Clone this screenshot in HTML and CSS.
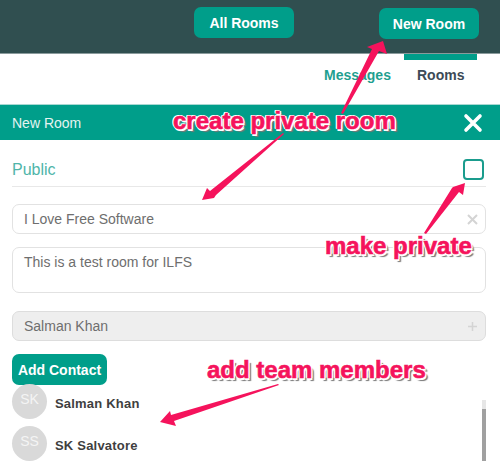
FILE: index.html
```html
<!DOCTYPE html>
<html lang="en">

<head>
    <meta charset="UTF-8">
    <meta name="viewport" content="width=device-width, initial-scale=1.0">
    <title>New Room</title>
    <link rel="stylesheet" href="styles.css">
</head>

<body>
    <div class="page">
        <header class="topbar">
            <button class="btn btn-all">All Rooms</button>
            <button class="btn btn-new">New Room</button>
        </header>

        <nav class="tabs">
            <a class="tab tab-messages">Messages</a>
            <a class="tab tab-rooms">Rooms</a>
        </nav>

        <div class="panel-head">
            <span>New Room</span>
            <svg class="close" width="20" height="20" viewBox="0 0 20 20">
                <path d="M3 3 L17 17 M17 3 L3 17" stroke="#fff" stroke-width="3.6" stroke-linecap="round" />
            </svg>
        </div>

        <div class="form">
            <div class="public-row">
                <span>Public</span>
                <span class="checkbox"></span>
            </div>

            <div class="field field-name">
                <span>I Love Free Software</span>
                <svg width="11" height="11" viewBox="0 0 11 11">
                    <path d="M1 1 L10 10 M10 1 L1 10" stroke="#d4d4d4" stroke-width="2" />
                </svg>
            </div>

            <div class="field field-desc">This is a test room for ILFS</div>

            <div class="field field-contact">
                <span>Salman Khan</span>
                <svg width="11" height="11" viewBox="0 0 11 11">
                    <path d="M5.5 1 V10 M1 5.5 H10" stroke="#d4d4d4" stroke-width="1.5" />
                </svg>
            </div>

            <button class="btn btn-add">Add Contact</button>

            <div class="members">
                <div class="member member-first">
                    <div class="avatar">SK</div>
                    <div class="name">Salman Khan</div>
                </div>
                <div class="member">
                    <div class="avatar">SS</div>
                    <div class="name">SK Salvatore</div>
                </div>
                <div class="scrollbar"></div>
            </div>
        </div>

        <!-- annotations drawn on top of the screenshot -->
        <svg class="arrows" width="500" height="461" viewBox="0 0 500 461">
            <g fill="#f5135c">
                <polygon points="383,41 387,54 379,51 343,114 341,113 372,49 367,47" />
                <polygon points="202,200 207,188 210,191 283,133 284,134 216,195 214,198" />
                <polygon points="465,183 463,195 459,192 426,234 424,233 452,188 453,187" />
                <polygon points="160,422 170,411 171,415 278,384 279,385 174,421 176,426" />
            </g>
        </svg>
        <div class="note note-room">create private room</div>
        <div class="note note-private">make private</div>
        <div class="note note-team">add team members</div>
    </div>
</body>

</html>
```

FILE: styles.css
```css
* {
    margin: 0;
    padding: 0;
    box-sizing: border-box;
}

body {
    font-family: "Liberation Sans", Arial, sans-serif;
    background-color: #fff;
}

.page {
    position: relative;
    width: 500px;
    height: 461px;
    overflow: hidden;
}

.topbar {
    display: flex;
    align-items: flex-start;
    height: 54px;
    padding-top: 7px;
    padding-left: 194px;
    background-color: #304f50;
    border-bottom: 1px solid #8a9b9c;
}

.btn {
    width: 100px;
    height: 31px;
    font-family: inherit;
    font-size: 14px;
    font-weight: bold;
    color: #fff;
    background-color: #009e8a;
    border: none;
    border-radius: 7px;
}

.btn-new {
    margin-top: 1px;
    margin-left: 85px;
}

.tabs {
    display: flex;
    height: 50px;
    padding-left: 324px;
}

.tab {
    font-size: 14px;
    font-weight: bold;
    line-height: 16px;
}

.tab-messages {
    width: 80px;
    padding-top: 13px;
    color: #1f9f90;
}

.tab-rooms {
    width: 73px;
    height: 100%;
    padding-left: 13px;
    padding-top: 7px;
    color: #3c4a56;
    border-top: 6px solid #009e8a;
}

.panel-head {
    display: flex;
    justify-content: space-between;
    align-items: center;
    height: 36px;
    padding: 0 17px 0 12px;
    font-size: 14px;
    color: #e4f4f1;
    background-color: #009e8a;
    border-top: 1px solid #a8d8d2;
}

.form {
    padding: 0 14px 0 12px;
}

.public-row {
    display: flex;
    justify-content: space-between;
    align-items: center;
    height: 47px;
    padding-top: 13px;
    margin-bottom: 17px;
    font-size: 16px;
    color: #4fb5a9;
    border-bottom: 1px solid #e8e8e8;
}

.checkbox {
    width: 21px;
    height: 21px;
    margin-right: 2px;
    border: 2.5px solid #1a9c8d;
    border-radius: 4px;
}

.field {
    display: flex;
    justify-content: space-between;
    align-items: center;
    height: 30px;
    padding: 0 7px 0 11px;
    font-size: 14px;
    color: #6e6e6e;
    border: 1px solid #e2e2e2;
    border-radius: 7px;
}

.field-desc {
    align-items: flex-start;
    height: 46px;
    margin-top: 13px;
    padding-top: 6px;
}

.field-contact {
    margin-top: 18px;
    background-color: #eee;
    border-color: #ddd;
}

.btn-add {
    display: block;
    width: 95px;
    height: 31px;
    margin-top: 13px;
}

.members {
    position: relative;
    height: 80px;
    margin-right: -14px;
}

.member {
    display: flex;
    align-items: center;
    height: 35px;
    margin-top: 7px;
}

.member-first {
    height: 28px;
    margin-top: 6px;
    align-items: flex-end;
}

.avatar {
    flex-shrink: 0;
    width: 35px;
    height: 35px;
    font-size: 14px;
    line-height: 30px;
    text-align: center;
    color: #f4f4f4;
    background-color: #d9d9d9;
    border-radius: 50%;
}

.name {
    margin-left: 8px;
    padding-top: 3px;
    font-size: 13px;
    font-weight: bold;
    letter-spacing: 0.2px;
    color: #3f3f3f;
}

.member-first .name {
    align-self: center;
    padding-top: 0;
    padding-bottom: 3px;
}

.scrollbar {
    position: absolute;
    top: 9px;
    left: 470px;
    width: 4px;
    height: 70px;
    background-color: #a0a0a0;
    border-top: 9px solid #e6e6e6;
}

.arrows {
    position: absolute;
    top: 0;
    left: 0;
}

.note {
    position: absolute;
    font-size: 24px;
    font-weight: bold;
    line-height: 28px;
    white-space: nowrap;
    color: #f5135c;
    -webkit-text-stroke: 0.6px #f5135c;
    text-shadow: -1.5px 0 0 #fff, 1.5px 0 0 #fff, 0 -1.5px 0 #fff, 0 1.5px 0 #fff, 1.5px 1.5px 0 #fff, -1.5px -1.5px 0 #fff, 3px 3px 1px #777;
}

.note-room {
    top: 107px;
    left: 173px;
}

.note-private {
    top: 232px;
    left: 325px;
}

.note-team {
    top: 356px;
    left: 207px;
}
```
